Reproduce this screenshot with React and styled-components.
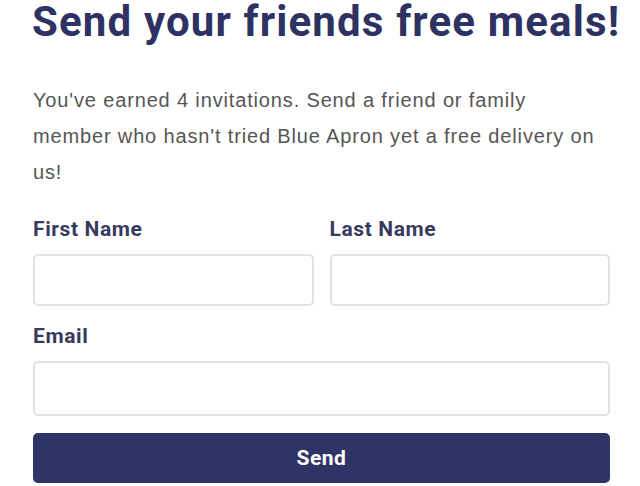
import React from 'react'
import styled, { createGlobalStyle } from 'styled-components'

const GlobalStyle = createGlobalStyle`
    body {
        margin: 0;
        background: #fff;
        font-family: "Liberation Sans", Arial, sans-serif;
    }
`

const Page = styled.div`
    width: 577px;
    padding: 0 0 0 33px;
`

const Title = styled.h1`
    margin: 0;
    width: max-content;
    font-family: Roboto, "Liberation Sans", sans-serif;
    font-weight: 700;
    font-size: 42px;
    line-height: 44px;
    letter-spacing: 1.15px;
    color: #2e3263;
    margin-left: -1px;
    white-space: nowrap;
`

const Intro = styled.p`
    margin: 38px 0 0;
    font-size: 20px;
    line-height: 36px;
    letter-spacing: 0.85px;
    color: #555;
`

const Fields = styled.form`
    display: grid;
    grid-template-columns: 1fr 1fr;
    column-gap: 16px;
    margin-top: 26px;
`

const Field = styled.label`
    display: flex;
    flex-direction: column;
    grid-column: ${props => props.wide ? '1 / span 2' : 'auto'};
`

const Label = styled.span`
    font-family: Roboto, "Liberation Sans", sans-serif;
    font-weight: 700;
    font-size: 21px;
    line-height: 26px;
    letter-spacing: 0.6px;
    color: #373a5e;
    margin-bottom: 12px;
`

const Input = styled.input`
    box-sizing: border-box;
    height: ${props => props.tall ? '55px' : '52px'};
    border: 2px solid #e2e2e2;
    border-radius: 5px;
    background: #fff;
    margin-bottom: 17px;
    font-size: 17px;
    padding: 0 12px;
    outline: none;
`

const SendButton = styled.button`
    grid-column: 1 / span 2;
    height: 50px;
    margin-top: 0;
    border: none;
    border-radius: 5px;
    background: #2f3467;
    color: #fff;
    font-family: Roboto, "Liberation Sans", sans-serif;
    font-weight: 700;
    font-size: 21px;
    letter-spacing: 0.5px;
    cursor: pointer;
`

const App = () => {
    return (
        <Page>
            <GlobalStyle />
            <Title>Send your friends free meals!</Title>
            <Intro>
                You've earned 4 invitations. Send a friend or family member who hasn't tried Blue Apron yet a free delivery on us!
            </Intro>
            <Fields onSubmit={e => e.preventDefault()}>
                <Field>
                    <Label>First Name</Label>
                    <Input type="text" />
                </Field>
                <Field>
                    <Label>Last Name</Label>
                    <Input type="text" />
                </Field>
                <Field wide>
                    <Label>Email</Label>
                    <Input type="email" tall />
                </Field>
                <SendButton type="submit">Send</SendButton>
            </Fields>
        </Page>
    )
}

export default App
